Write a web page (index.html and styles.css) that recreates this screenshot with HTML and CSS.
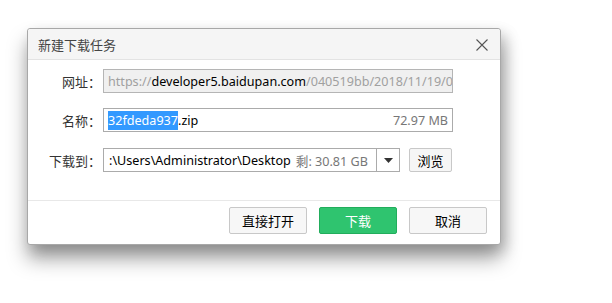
FILE: index.html
```html
<!DOCTYPE html>
<html>
<head>
<meta charset="utf-8">
<link rel="stylesheet" href="styles.css">
</head>
<body>
<div class="dialog">
  <div class="titlebar">
    <span class="title">新建下载任务</span>
    <svg class="close" width="12" height="12" viewBox="0 0 12 12"><path d="M0.5 0.5 L11.5 11.5 M11.5 0.5 L0.5 11.5" stroke="#555" stroke-width="1.1" fill="none"/></svg>
  </div>
  <div class="body">
    <div class="row">
      <div class="label">网址：</div>
      <div class="field disabled"><span class="dim">https://</span>developer5.baidupan.com<span class="dim">/040519bb/2018/11/19/0</span></div>
    </div>
    <div class="row">
      <div class="label">名称：</div>
      <div class="field name"><span class="sel">32fdeda937</span>.zip<span class="size">72.97 MB</span></div>
    </div>
    <div class="row">
      <div class="label">下载到：</div>
      <div class="combo">
        <div class="path">:\Users\Administrator\Desktop <span class="free">剩: 30.81 GB</span></div>
        <div class="arrow"><svg width="9" height="5" viewBox="0 0 9 5"><path d="M0 0 H9 L4.5 5 Z" fill="#333"/></svg></div>
      </div>
      <button class="browse">浏览</button>
    </div>
  </div>
  <div class="footer">
    <button class="btn">直接打开</button>
    <button class="btn primary">下载</button>
    <button class="btn">取消</button>
  </div>
</div>
</body>
</html>
```
FILE: styles.css
```css
html, body {
  margin: 0;
  padding: 0;
  background: #fff;
}
*, *::before, *::after {
  box-sizing: border-box;
}
body {
  font-family: "Noto Sans CJK SC", sans-serif;
  font-size: 13px;
  color: #333;
  padding: 28px 0 0 27px;
  min-height: 100vh;
}
.dialog {
  width: 474px;
  height: 217px;
  border: 1px solid #a8a8a8;
  border-radius: 3px;
  background: #fff;
  box-shadow: 0 14px 20px rgba(0,0,0,0.35), 5px 6px 14px rgba(0,0,0,0.18);
  display: flex;
  flex-direction: column;
}
.titlebar {
  height: 31px;
  flex: none;
  background: #f5f5f5;
  border-bottom: 1px solid #e3e3e3;
  border-radius: 3px 3px 0 0;
  display: flex;
  align-items: center;
  justify-content: space-between;
  padding: 0 12px 0 10px;
}
.title {
  color: #444;
  font-size: 13px;
}
.close {
  display: block;
  margin-top: 2px;
}
.body {
  flex: 1;
  padding-top: 9px;
  display: flex;
  flex-direction: column;
  gap: 15px;
}
.row {
  display: flex;
  align-items: center;
  height: 24px;
}
.row:last-child {
  margin-top: 1px;
}
.label {
  width: 73px;
  text-align: right;
  color: #333;
  margin-right: 2px;
  font-family: "Noto Sans CJK SC", sans-serif;
}
.field {
  width: 350px;
  height: 24px;
  border: 1px solid #ababab;
  display: flex;
  align-items: center;
  padding: 0 4px;
  white-space: nowrap;
  overflow: hidden;
  color: #000;
  font-family: "Noto Sans", "Noto Sans CJK SC", sans-serif;
  font-size: 12.6px;
}
.field.disabled {
  background: #f0f0f0;
  border-color: #b5b5b5;
  padding-left: 4px;
}
.dim {
  color: #a0a0a0;
}
.sel {
  background: #3399ff;
  color: #fff;
  line-height: 19px;
}
.size {
  margin-left: auto;
  color: #777;
}
.combo {
  width: 297px;
  height: 24px;
  border: 1px solid #ababab;
  display: flex;
  font-family: "Noto Sans", "Noto Sans CJK SC", sans-serif;
  font-size: 12.6px;
}
.path {
  flex: 1;
  display: flex;
  align-items: center;
  padding-left: 5px;
  color: #000;
  white-space: nowrap;
  overflow: hidden;
}
.free {
  color: #777;
  margin-left: 5px;
}
.arrow {
  width: 23px;
  flex: none;
  border-left: 1px solid #ababab;
  display: flex;
  align-items: center;
  justify-content: center;
}
.arrow svg {
  display: block;
}
button {
  font-family: "Noto Sans CJK SC", sans-serif;
  font-size: 13px;
  cursor: pointer;
}
.browse {
  margin-left: 9px;
  width: 43px;
  height: 24px;
  padding: 0;
  border: 1px solid #c8c8c8;
  border-radius: 2px;
  background: #f6f6f6;
  color: #000;
}
.footer {
  height: 44px;
  flex: none;
  border-top: 1px solid #e8e8e8;
  display: flex;
  justify-content: flex-end;
  align-items: flex-start;
  gap: 12px;
  padding: 6px 13px 0 0;
}
.btn {
  width: 78px;
  height: 27px;
  padding: 0;
  border: 1px solid #c8c8c8;
  border-radius: 2px;
  background: #f7f7f7;
  color: #000;
}
.btn.primary {
  background: #2fc46f;
  border-color: #22ad5c;
  color: #fff;
}
```
